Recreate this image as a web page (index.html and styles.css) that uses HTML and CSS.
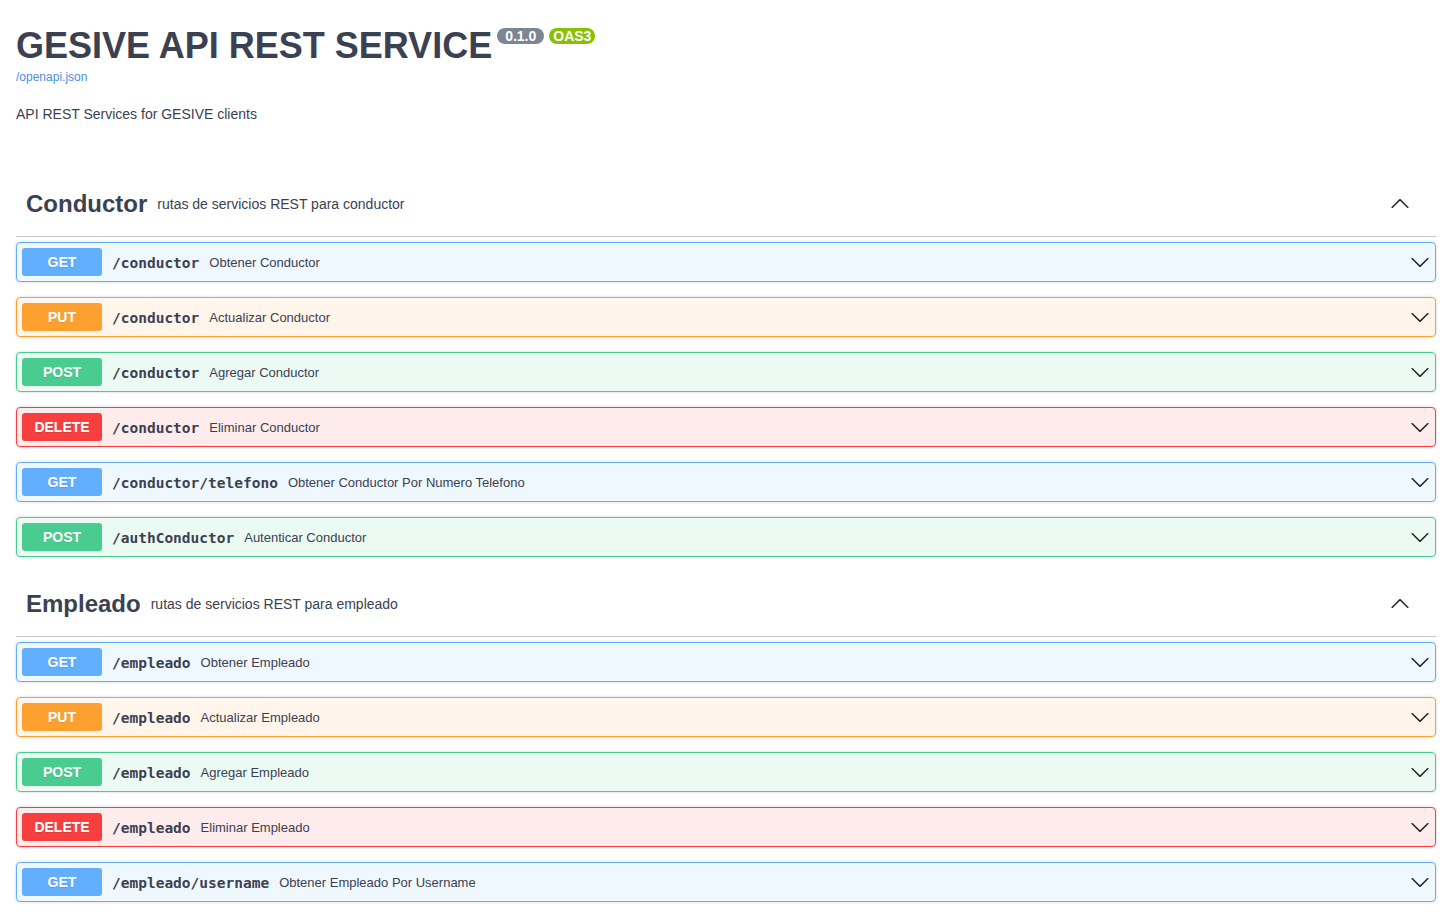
FILE: index.html
```html
<!DOCTYPE html>
<html lang="es">
<head>
<meta charset="utf-8">
<title>GESIVE API REST SERVICE</title>
<link rel="stylesheet" href="styles.css">
</head>
<body>
<div class="wrapper">
  <div class="info">
    <h2 class="title">GESIVE API REST SERVICE
      <span class="version">0.1.0</span>
      <span class="version oas">OAS3</span>
    </h2>
    <a class="link" href="#">/openapi.json</a>
    <p class="description">API REST Services for GESIVE clients</p>
  </div>

  <section class="tag-section">
    <h3 class="opblock-tag">
      <span class="tag-name">Conductor</span>
      <small>rutas de servicios REST para conductor</small>
      <svg class="tag-arrow" width="20" height="20" viewBox="0 0 20 20"><path transform="rotate(180 10 10)" d="M17.418 6.109c.272-.268.709-.268.979 0s.271.701 0 .969l-7.908 7.83c-.27.268-.707.268-.979 0l-7.908-7.83c-.27-.268-.27-.701 0-.969.271-.268.709-.268.979 0L10 13.25l7.418-7.141z"/></svg>
    </h3>
    <div class="opblock get"><div class="summary"><span class="method">GET</span><span class="path">/conductor</span><span class="desc">Obtener Conductor</span><svg class="arrow" width="20" height="20" viewBox="0 0 20 20"><path d="M17.418 6.109c.272-.268.709-.268.979 0s.271.701 0 .969l-7.908 7.83c-.27.268-.707.268-.979 0l-7.908-7.83c-.27-.268-.27-.701 0-.969.271-.268.709-.268.979 0L10 13.25l7.418-7.141z"/></svg></div></div>
    <div class="opblock put"><div class="summary"><span class="method">PUT</span><span class="path">/conductor</span><span class="desc">Actualizar Conductor</span><svg class="arrow" width="20" height="20" viewBox="0 0 20 20"><path d="M17.418 6.109c.272-.268.709-.268.979 0s.271.701 0 .969l-7.908 7.83c-.27.268-.707.268-.979 0l-7.908-7.83c-.27-.268-.27-.701 0-.969.271-.268.709-.268.979 0L10 13.25l7.418-7.141z"/></svg></div></div>
    <div class="opblock post"><div class="summary"><span class="method">POST</span><span class="path">/conductor</span><span class="desc">Agregar Conductor</span><svg class="arrow" width="20" height="20" viewBox="0 0 20 20"><path d="M17.418 6.109c.272-.268.709-.268.979 0s.271.701 0 .969l-7.908 7.83c-.27.268-.707.268-.979 0l-7.908-7.83c-.27-.268-.27-.701 0-.969.271-.268.709-.268.979 0L10 13.25l7.418-7.141z"/></svg></div></div>
    <div class="opblock delete"><div class="summary"><span class="method">DELETE</span><span class="path">/conductor</span><span class="desc">Eliminar Conductor</span><svg class="arrow" width="20" height="20" viewBox="0 0 20 20"><path d="M17.418 6.109c.272-.268.709-.268.979 0s.271.701 0 .969l-7.908 7.83c-.27.268-.707.268-.979 0l-7.908-7.83c-.27-.268-.27-.701 0-.969.271-.268.709-.268.979 0L10 13.25l7.418-7.141z"/></svg></div></div>
    <div class="opblock get"><div class="summary"><span class="method">GET</span><span class="path">/conductor/telefono</span><span class="desc">Obtener Conductor Por Numero Telefono</span><svg class="arrow" width="20" height="20" viewBox="0 0 20 20"><path d="M17.418 6.109c.272-.268.709-.268.979 0s.271.701 0 .969l-7.908 7.83c-.27.268-.707.268-.979 0l-7.908-7.83c-.27-.268-.27-.701 0-.969.271-.268.709-.268.979 0L10 13.25l7.418-7.141z"/></svg></div></div>
    <div class="opblock post"><div class="summary"><span class="method">POST</span><span class="path">/authConductor</span><span class="desc">Autenticar Conductor</span><svg class="arrow" width="20" height="20" viewBox="0 0 20 20"><path d="M17.418 6.109c.272-.268.709-.268.979 0s.271.701 0 .969l-7.908 7.83c-.27.268-.707.268-.979 0l-7.908-7.83c-.27-.268-.27-.701 0-.969.271-.268.709-.268.979 0L10 13.25l7.418-7.141z"/></svg></div></div>
  </section>

  <section class="tag-section">
    <h3 class="opblock-tag">
      <span class="tag-name">Empleado</span>
      <small>rutas de servicios REST para empleado</small>
      <svg class="tag-arrow" width="20" height="20" viewBox="0 0 20 20"><path transform="rotate(180 10 10)" d="M17.418 6.109c.272-.268.709-.268.979 0s.271.701 0 .969l-7.908 7.83c-.27.268-.707.268-.979 0l-7.908-7.83c-.27-.268-.27-.701 0-.969.271-.268.709-.268.979 0L10 13.25l7.418-7.141z"/></svg>
    </h3>
    <div class="opblock get"><div class="summary"><span class="method">GET</span><span class="path">/empleado</span><span class="desc">Obtener Empleado</span><svg class="arrow" width="20" height="20" viewBox="0 0 20 20"><path d="M17.418 6.109c.272-.268.709-.268.979 0s.271.701 0 .969l-7.908 7.83c-.27.268-.707.268-.979 0l-7.908-7.83c-.27-.268-.27-.701 0-.969.271-.268.709-.268.979 0L10 13.25l7.418-7.141z"/></svg></div></div>
    <div class="opblock put"><div class="summary"><span class="method">PUT</span><span class="path">/empleado</span><span class="desc">Actualizar Empleado</span><svg class="arrow" width="20" height="20" viewBox="0 0 20 20"><path d="M17.418 6.109c.272-.268.709-.268.979 0s.271.701 0 .969l-7.908 7.83c-.27.268-.707.268-.979 0l-7.908-7.83c-.27-.268-.27-.701 0-.969.271-.268.709-.268.979 0L10 13.25l7.418-7.141z"/></svg></div></div>
    <div class="opblock post"><div class="summary"><span class="method">POST</span><span class="path">/empleado</span><span class="desc">Agregar Empleado</span><svg class="arrow" width="20" height="20" viewBox="0 0 20 20"><path d="M17.418 6.109c.272-.268.709-.268.979 0s.271.701 0 .969l-7.908 7.83c-.27.268-.707.268-.979 0l-7.908-7.83c-.27-.268-.27-.701 0-.969.271-.268.709-.268.979 0L10 13.25l7.418-7.141z"/></svg></div></div>
    <div class="opblock delete"><div class="summary"><span class="method">DELETE</span><span class="path">/empleado</span><span class="desc">Eliminar Empleado</span><svg class="arrow" width="20" height="20" viewBox="0 0 20 20"><path d="M17.418 6.109c.272-.268.709-.268.979 0s.271.701 0 .969l-7.908 7.83c-.27.268-.707.268-.979 0l-7.908-7.83c-.27-.268-.27-.701 0-.969.271-.268.709-.268.979 0L10 13.25l7.418-7.141z"/></svg></div></div>
    <div class="opblock get"><div class="summary"><span class="method">GET</span><span class="path">/empleado/username</span><span class="desc">Obtener Empleado Por Username</span><svg class="arrow" width="20" height="20" viewBox="0 0 20 20"><path d="M17.418 6.109c.272-.268.709-.268.979 0s.271.701 0 .969l-7.908 7.83c-.27.268-.707.268-.979 0l-7.908-7.83c-.27-.268-.27-.701 0-.969.271-.268.709-.268.979 0L10 13.25l7.418-7.141z"/></svg></div></div>
  </section>
</div>
</body>
</html>
```

FILE: styles.css
```css
html, body {
  margin: 0;
  padding: 0;
  background: #fff;
}

body {
  font-family: "Liberation Sans", Arial, sans-serif;
  color: #3b4151;
}

.wrapper {
  padding: 0 6px 0 16px;
}

.info {
  padding-top: 26px;
  padding-bottom: 50px;
}

.title {
  display: flex;
  align-items: flex-start;
  margin: 0;
  font-size: 36px;
  line-height: 40px;
  font-weight: 700;
  color: #3b4151;
}

.version {
  display: inline-block;
  margin: 2px 0 0 5px;
  padding: 0 8px;
  font-size: 14px;
  line-height: 16px;
  font-weight: 700;
  color: #fff;
  background: #7d8492;
  border-radius: 57px;
}

.version.oas {
  padding: 0 4px;
  background: #89bf04;
}

.link {
  display: block;
  margin-top: 4px;
  font-size: 12px;
  line-height: 14px;
  color: #4990e2;
  text-decoration: none;
}

.description {
  margin: 22px 0 0;
  font-size: 14px;
  line-height: 16px;
}

.tag-section {
  display: flex;
  flex-direction: column;
}

.opblock-tag {
  display: flex;
  align-items: center;
  box-sizing: border-box;
  height: 65px;
  margin: 0 0 5px;
  padding: 10px 20px 10px 10px;
  border-bottom: 1px solid rgba(59, 65, 81, 0.3);
  font-size: 24px;
  font-weight: 700;
  color: #3b4151;
}

.opblock-tag small {
  flex: 1;
  padding: 0 10px;
  font-size: 14px;
  font-weight: 400;
}

.tag-arrow {
  margin-right: 6px;
  fill: #222;
}

.opblock {
  margin: 0 0 15px;
  border: 1px solid #000;
  border-radius: 4px;
  box-shadow: 0 0 3px rgba(0, 0, 0, 0.19);
}

.summary {
  display: flex;
  align-items: center;
  padding: 5px;
}

.method {
  min-width: 80px;
  padding: 6px 0;
  font-size: 14px;
  line-height: 16px;
  font-weight: 700;
  text-align: center;
  color: #fff;
  border-radius: 3px;
  text-shadow: 0 1px 0 rgba(0, 0, 0, 0.1);
}

.path {
  padding: 2px 10px 0;
  font-family: "DejaVu Sans Mono", "Liberation Mono", monospace;
  font-size: 14.5px;
  font-weight: 700;
  color: #3b4151;
}

.desc {
  flex: 1;
  font-size: 13px;
  color: #3b4151;
}

.arrow {
  fill: #222;
}

.get { border-color: #61affe; background: rgba(97, 175, 254, 0.1); }
.get .method { background: #61affe; }
.put { border-color: #fca130; background: rgba(252, 161, 48, 0.1); }
.put .method { background: #fca130; }
.post { border-color: #49cc90; background: rgba(73, 204, 144, 0.1); }
.post .method { background: #49cc90; }
.delete { border-color: #f93e3e; background: rgba(249, 62, 62, 0.1); }
.delete .method { background: #f93e3e; }
```
